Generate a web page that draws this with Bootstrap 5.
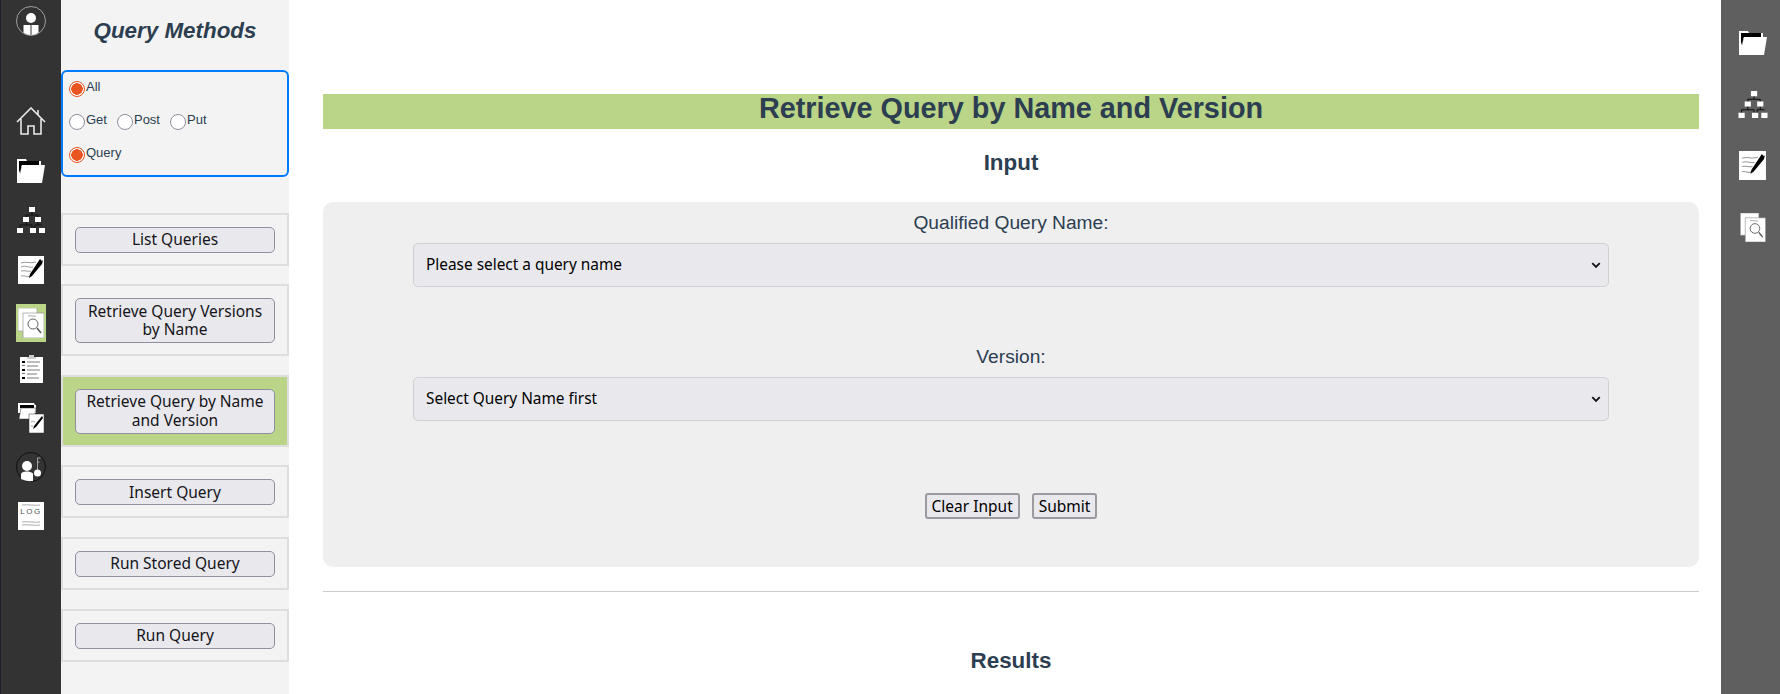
<!DOCTYPE html>
<html lang="en">
<head>
    <meta charset="UTF-8">
    <meta name="viewport" content="width=device-width, initial-scale=1.0">
    <title>Retrieve Query by Name and Version</title>
    <link href="https://cdn.jsdelivr.net/npm/bootstrap@5.3.0/dist/css/bootstrap.min.css" rel="stylesheet">
    <style>
        html, body { height: 100%; }
        body { overflow: hidden; font-family: "Liberation Sans", Arial, sans-serif; color: #2c3e50; }
        .app-shell { height: 694px; }

        .left-rail { width: 61px; background: #333; border-left: 1px solid #241c28; }
        .right-rail { width: 59px; padding-left: 4px; background: #5f5f5f; }
        .rail-icon { display: block; }
        .ic-user { margin-top: 6px; width: 30px; height: 30px; }
        .ic-home { margin-top: 71px; width: 30px; height: 28px; }
        .ic-folder { margin-top: 24px; width: 28px; height: 24px; }
        .ic-tree { margin-top: 24px; width: 28px; height: 26px; }
        .ic-note { margin-top: 23px; width: 26px; height: 28px; }
        .ic-active-wrap { margin-top: 20px; width: 30px; height: 38px; background: #bad588; }
        .ic-query { width: 26px; height: 30px; }
        .ic-clip { margin-top: 13px; width: 23px; height: 28px; }
        .ic-combo { margin-top: 20px; width: 26px; height: 30px; }
        .ic-fed { margin-top: 19px; width: 30px; height: 30px; }
        .ic-log { margin-top: 20px; width: 26px; height: 28px; }
        .rr-folder { margin-top: 31px; }
        .rr-tree { margin-top: 36px; width: 30px; height: 27px; }
        .rr-note { margin-top: 33px; width: 27px; height: 29px; }
        .rr-query { margin-top: 33px; width: 26px; height: 29px; }

        .method-side { width: 228px; background: #f3f3f3; }
        .side-title { font-size: 22.4px; font-weight: 700; font-style: italic; line-height: 28px; margin: 17px 0 25px; text-align: center; }
        .filter-box { height: 107px; border: 2px solid #007bff; border-radius: 6px; padding: 9px 6px 0; }
        .radio-row { height: 33px; font-size: 13px; line-height: 15px; }
        .radio-item { margin-right: 10px; }
        .radio-item span { margin: -2px 0 0 1px; }
        .radio-dot { appearance: none; width: 16px; height: 16px; margin: 0; border: 1px solid #8f8f9d; border-radius: 50%; background: #fff; }
        .radio-dot:checked { border: 1px solid #e95420; background: radial-gradient(circle, #e95420 0 5.5px, #fff 6px); }
        .method-list { margin-top: 35.5px; }
        .method-card { margin-bottom: 18.5px; padding: 12px 12px 11px; border: 2px solid #dedede; }
        .method-card.is-current { background: #bad588; }
        .method-btn { display: block; width: 200px; padding: 2.5px 6px 3.5px; border: 1px solid #8f8f9d; border-radius: 5px; background: #e9e9ed; color: #15141a; font-family: "Noto Sans", sans-serif; font-size: 15.5px; line-height: 18.4px; }

        .main-pane { padding: 94px 22px 0 34px; min-width: 0; }
        .page-banner { height: 35px; margin: 0; background: #bad588; font-size: 28.8px; font-weight: 700; line-height: 28px; text-align: center; }
        .sec-head { font-size: 22.4px; font-weight: 700; line-height: 26px; margin: 21px 0 0; text-align: center; }
        .input-panel { height: 365px; margin-top: 26px; padding-top: 10px; background: #efeff0; border-radius: 10px; }
        .field-label { display: block; font-size: 19.2px; line-height: 22px; margin-bottom: 9px; text-align: center; }
        .query-select { width: 1196px; height: 44px; margin: 0 auto; padding: 0 36px 0 12px; background-color: #e9e9ed; background-image: url("data:image/svg+xml,%3csvg xmlns='http://www.w3.org/2000/svg' viewBox='0 0 16 12'%3e%3cpath fill='none' stroke='%2315141a' stroke-width='3' d='M2 3l6 6 6-6'/%3e%3c/svg%3e"); background-position: right 7px center; background-size: 10px 8px; border: 1px solid #cfcfd4; border-radius: 5px; color: #000; font-family: "Noto Sans", sans-serif; font-size: 15.4px; }
        .second-field { margin-top: 59px; }
        .action-row { margin-top: 72px; column-gap: 12px; }
        .action-btn { padding: 0 5px 1px; height: 26px; border: 2px solid #9a9a9f; border-radius: 3px; background: #e9e9ed; color: #000; font-family: "Noto Sans", sans-serif; font-size: 15.5px; line-height: 20px; }
        .split-line { margin: 24px 0 0; border: 0; border-top: 1px solid #ccc; opacity: 1; }
        .results-head { margin-top: 56px; }
    </style>
</head>
<body>
    <svg width="0" height="0" class="position-absolute">
        <symbol id="s-folder" viewBox="0 0 28 24">
            <path d="M0 0h9l1 2h14v6H3v16H0z" fill="#fff"/>
            <path d="M2 2h20v4H5L2 14z" fill="#000"/>
            <path d="M5 6h23l-3 18H1z" fill="#fff"/>
        </symbol>
        <symbol id="s-tree" viewBox="0 0 28 26">
            <path d="M15 5v3M9 8h12M9 8v2M21 8v2M9 15v3M3 18h12M3 18v3M15 18v3M25 18h-7v3M21 15v3" stroke="#111" fill="none"/>
            <path d="M12 0h6v5h-6zM6 10h6v5H6zM18 10h6v5h-6zM0 21h6v5H0zM13 21h6v5h-6zM22 21h6v5h-6z" fill="#fff"/>
        </symbol>
        <symbol id="s-note" viewBox="0 0 26 28">
            <path d="M0 0h26v28H0z" fill="#fff"/>
            <path d="M3 7c5-2 9 1 15-1M3 11c5-2 8 1 12 0M3 15c5-1 6 1 10 0M3 20c4-1 6 2 9 0" stroke="#999" fill="none"/>
            <path d="M22 3l2 2 1-1-1 4-10 12-3 2 1-4z" fill="#000"/>
        </symbol>
        <symbol id="s-query" viewBox="0 0 26 30">
            <path d="M0 0h19v23H0z" fill="#fff" stroke="#999" stroke-width=".6"/>
            <path d="M5 5h21v25H5z" fill="#fff" stroke="#888" stroke-width=".6"/>
            <path d="M10 8c3-1 5 1 8 0" stroke="#aaa" fill="none"/>
            <circle cx="15" cy="16" r="5" fill="#fff" stroke="#666"/>
            <path d="M19 20l4 5" stroke="#555" stroke-width="1.500"/>
        </symbol>
    </svg>

    <div class="app-shell d-flex">
        <nav class="left-rail d-flex flex-column align-items-center flex-shrink-0">
            <svg class="rail-icon ic-user" viewBox="0 0 30 30">
                <circle cx="15" cy="15" r="14.500" fill="#333" stroke="#bbb" stroke-width=".8"/>
                <circle cx="15" cy="12" r="5" fill="#fff"/>
                <path d="M7.500 19h7v10c-3 0-5.500-1-7-2.500zM15.500 19h7v7.500c-1.500 1.500-4 2.500-7 2.500z" fill="#fff"/>
            </svg>
            <svg class="rail-icon ic-home" viewBox="0 0 30 28">
                <path d="M1 15L15 1l14 14M22 8V3M5 12v15h7v-8h6v8h7V12" fill="none" stroke="#e8e8e8" stroke-width="1.600"/>
            </svg>
            <svg class="rail-icon ic-folder"><use href="#s-folder"/></svg>
            <svg class="rail-icon ic-tree"><use href="#s-tree"/></svg>
            <svg class="rail-icon ic-note"><use href="#s-note"/></svg>
            <div class="ic-active-wrap d-flex align-items-center justify-content-center">
                <svg class="rail-icon ic-query"><use href="#s-query"/></svg>
            </div>
            <svg class="rail-icon ic-clip" viewBox="0 0 23 28">
                <path d="M0 2h23v26H0z" fill="#fff"/>
                <path d="M9 2V0h5v2h2v2H7V2z" fill="#ccc"/>
                <path d="M2 6h3v2H2zM2 14h3v2H2zM2 22h3v2H2z" fill="#000"/>
                <path d="M2 10.500h3M2 18.500h3M7 7h13M7 11h11M7 15h13M7 19h10M7 23h12" stroke="#555" stroke-width=".8"/>
            </svg>
            <svg class="rail-icon ic-combo" viewBox="0 0 26 30">
                <path d="M0 0h16l1 2h1v8H0v10z" fill="#fff"/>
                <path d="M2 2h14v3H2z" fill="#000"/>
                <path d="M3 5h15l-2 11H1z" fill="#fff" stroke="#333" stroke-width=".5"/>
                <path d="M11 11h15v19H11z" fill="#fff" stroke="#333" stroke-width=".5"/>
                <path d="M24 13l-8 10-1 3 3-2 7-9z" fill="#000"/>
                <path d="M13 19c2-1 3 0 4 0M13 23h2" stroke="#999" fill="none"/>
            </svg>
            <svg class="rail-icon ic-fed" viewBox="0 0 30 30">
                <circle cx="15" cy="15" r="14.500" fill="#333" stroke="#111"/>
                <circle cx="11" cy="14" r="5" fill="#fff"/>
                <path d="M5 27v-4c0-3 3-3.500 6-3.500 2 0 4 .5 6 2v7.500c-5 .5-9-.5-12-2z" fill="#fff"/>
                <circle cx="21.500" cy="21" r="3.500" fill="#fff"/>
                <path d="M21.500 18V6h3M21.500 10h2" stroke="#bbb" stroke-width=".8" fill="none"/>
            </svg>
            <svg class="rail-icon ic-log" viewBox="0 0 26 28">
                <path d="M0 0h26v28H0z" fill="#fff"/>
                <path d="M4 3c6-1 12 1 18 0M4 20c6-1 12 1 18 0M4 23c6-1 12 1 18 0" stroke="#888" stroke-width=".7" fill="none"/>
                <text x="13" y="12" text-anchor="middle" font-family="Liberation Sans, sans-serif" font-size="8" letter-spacing="1.500" fill="#555">LOG</text>
            </svg>
        </nav>

        <aside class="method-side flex-shrink-0">
            <h2 class="side-title">Query Methods</h2>
            <div class="filter-box">
                <div class="radio-row d-flex">
                    <label class="radio-item d-flex"><input class="radio-dot" type="radio" checked><span>All</span></label>
                </div>
                <div class="radio-row d-flex">
                    <label class="radio-item d-flex"><input class="radio-dot" type="radio" name="verb"><span>Get</span></label>
                    <label class="radio-item d-flex"><input class="radio-dot" type="radio" name="verb"><span>Post</span></label>
                    <label class="radio-item d-flex"><input class="radio-dot" type="radio" name="verb"><span>Put</span></label>
                </div>
                <div class="radio-row d-flex">
                    <label class="radio-item d-flex"><input class="radio-dot" type="radio" checked><span>Query</span></label>
                </div>
            </div>
            <div class="method-list">
                <div class="method-card"><button class="method-btn" type="button">List Queries</button></div>
                <div class="method-card"><button class="method-btn" type="button">Retrieve Query Versions by Name</button></div>
                <div class="method-card is-current"><button class="method-btn" type="button">Retrieve Query by Name and Version</button></div>
                <div class="method-card"><button class="method-btn" type="button">Insert Query</button></div>
                <div class="method-card"><button class="method-btn" type="button">Run Stored Query</button></div>
                <div class="method-card"><button class="method-btn" type="button">Run Query</button></div>
            </div>
        </aside>

        <main class="main-pane flex-grow-1">
            <h1 class="page-banner">Retrieve Query by Name and Version</h1>
            <h3 class="sec-head">Input</h3>
            <form class="input-panel">
                <label class="field-label" for="queryName">Qualified Query Name:</label>
                <select class="form-select query-select" id="queryName">
                    <option>Please select a query name</option>
                </select>
                <label class="field-label second-field" for="queryVersion">Version:</label>
                <select class="form-select query-select" id="queryVersion">
                    <option>Select Query Name first</option>
                </select>
                <div class="action-row d-flex justify-content-center">
                    <button class="action-btn" type="button">Clear Input</button>
                    <button class="action-btn" type="button">Submit</button>
                </div>
            </form>
            <hr class="split-line">
            <h3 class="sec-head results-head">Results</h3>
        </main>

        <nav class="right-rail d-flex flex-column align-items-center flex-shrink-0">
            <svg class="rail-icon ic-folder rr-folder"><use href="#s-folder"/></svg>
            <svg class="rail-icon rr-tree"><use href="#s-tree"/></svg>
            <svg class="rail-icon rr-note"><use href="#s-note"/></svg>
            <svg class="rail-icon rr-query"><use href="#s-query"/></svg>
        </nav>
    </div>

    <script src="https://cdn.jsdelivr.net/npm/bootstrap@5.3.0/dist/js/bootstrap.bundle.min.js"></script>
</body>
</html>
